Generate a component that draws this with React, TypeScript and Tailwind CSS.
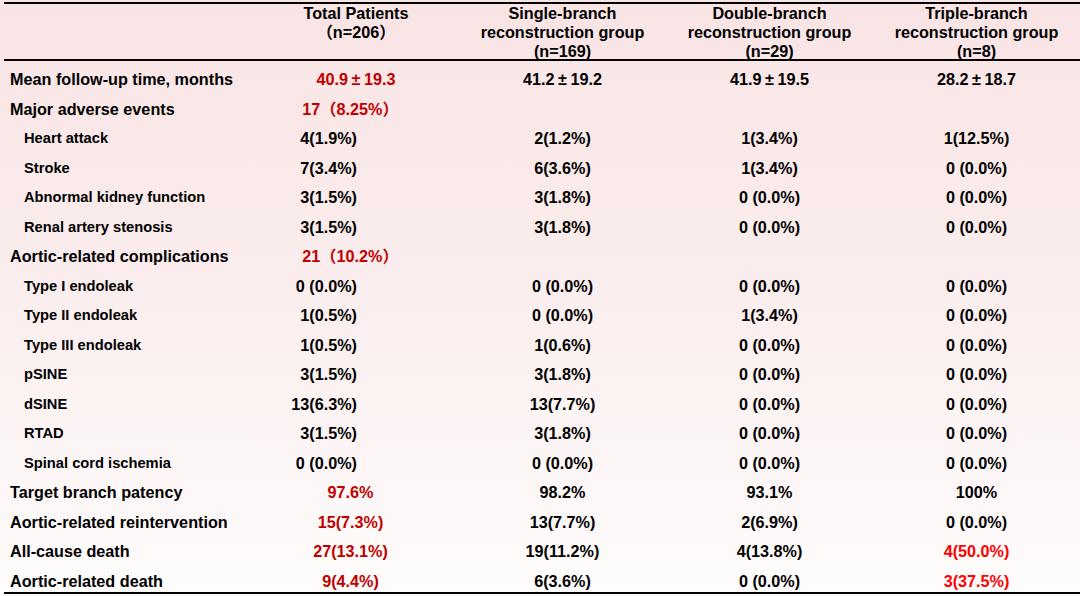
import React from "react";

type Row = {
  label: string;
  sub?: boolean;
  vals: string[];
  red?: number[]; // dark red columns
  bright?: number[]; // bright red columns
  pm?: boolean;
};

const rows: Row[] = [
  { label: "Mean follow-up time, months", vals: ["40.9±19.3", "41.2±19.2", "41.9±19.5", "28.2±18.7"], red: [0], pm: true },
  { label: "Major adverse events", vals: ["17（8.25%）", "", "", ""], red: [0] },
  { label: "Heart attack", sub: true, vals: ["4(1.9%)", "2(1.2%)", "1(3.4%)", "1(12.5%)"] },
  { label: "Stroke", sub: true, vals: ["7(3.4%)", "6(3.6%)", "1(3.4%)", "0 (0.0%)"] },
  { label: "Abnormal kidney function", sub: true, vals: ["3(1.5%)", "3(1.8%)", "0 (0.0%)", "0 (0.0%)"] },
  { label: "Renal artery stenosis", sub: true, vals: ["3(1.5%)", "3(1.8%)", "0 (0.0%)", "0 (0.0%)"] },
  { label: "Aortic-related complications", vals: ["21（10.2%）", "", "", ""], red: [0] },
  { label: "Type I endoleak", sub: true, vals: ["0 (0.0%)", "0 (0.0%)", "0 (0.0%)", "0 (0.0%)"] },
  { label: "Type II endoleak", sub: true, vals: ["1(0.5%)", "0 (0.0%)", "1(3.4%)", "0 (0.0%)"] },
  { label: "Type III endoleak", sub: true, vals: ["1(0.5%)", "1(0.6%)", "0 (0.0%)", "0 (0.0%)"] },
  { label: "pSINE", sub: true, vals: ["3(1.5%)", "3(1.8%)", "0 (0.0%)", "0 (0.0%)"] },
  { label: "dSINE", sub: true, vals: ["13(6.3%)", "13(7.7%)", "0 (0.0%)", "0 (0.0%)"] },
  { label: "RTAD", sub: true, vals: ["3(1.5%)", "3(1.8%)", "0 (0.0%)", "0 (0.0%)"] },
  { label: "Spinal cord ischemia", sub: true, vals: ["0 (0.0%)", "0 (0.0%)", "0 (0.0%)", "0 (0.0%)"] },
  { label: "Target branch patency", vals: ["97.6%", "98.2%", "93.1%", "100%"], red: [0] },
  { label: "Aortic-related reintervention", vals: ["15(7.3%)", "13(7.7%)", "2(6.9%)", "0 (0.0%)"], red: [0] },
  { label: "All-cause death", vals: ["27(13.1%)", "19(11.2%)", "4(13.8%)", "4(50.0%)"], red: [0], bright: [3] },
  { label: "Aortic-related death", vals: ["9(4.4%)", "6(3.6%)", "0 (0.0%)", "3(37.5%)"], red: [0], bright: [3] },
];

const headers = [
  ["Total Patients", "（n=206）"],
  ["Single-branch", "reconstruction group", "(n=169)"],
  ["Double-branch", "reconstruction group", "(n=29)"],
  ["Triple-branch", "reconstruction group", "(n=8)"],
];

function Value({ text, pm }: { text: string; pm?: boolean }) {
  if (pm && text.includes("±")) {
    const [a, b] = text.split("±");
    return (
      <span>
        {a}
        <span className="inline-block w-[16px] text-center">±</span>
        {b}
      </span>
    );
  }
  return <span>{text}</span>;
}

export default function App() {
  return (
    <main
      className="w-[1080px] h-[596px] overflow-hidden bg-gradient-to-b from-[#f9e4e4] via-[#fbeeee] to-[#fefcfc] text-black font-bold"
      style={{ fontFamily: '"Liberation Sans", Arial, "Noto Sans CJK SC", sans-serif' }}
    >
      <div className="ml-[4px] mt-[2px] w-[1076px] border-t-2 border-b-2 border-black">
        {/* header */}
        <div className="grid grid-cols-[249px_206px_207px_207px_207px] h-[57px] border-b-2 border-black text-[16.2px] leading-[19px]">
          <div />
          {headers.map((h, i) => (
            <div key={i} className="flex flex-col items-center">
              {h.map((line) => (
                <span key={line}>{line}</span>
              ))}
            </div>
          ))}
        </div>

        {/* body */}
        {rows.map((r) => (
          <div
            key={r.label}
            className="grid grid-cols-[249px_206px_207px_207px_207px] h-[29.5px] pt-[7px] items-center text-[16.2px] leading-[20px]"
          >
            <div className={r.sub ? "pl-[20px] text-[14.7px]" : "pl-[6px]"}>{r.label}</div>
            {r.vals.map((v, i) => {
              const isRed = r.red?.includes(i);
              const isBright = r.bright?.includes(i);
              let align = "text-center";
              if (i === 0 && r.sub) align = "text-right pr-[102px]";
              else if (i === 0 && !r.pm) align = "text-center pr-[11px]";
              return (
                <div
                  key={i}
                  className={`${align} ${isRed ? "text-[#c00000]" : isBright ? "text-[#ff0000]" : "text-black"}`}
                >
                  <Value text={v} pm={r.pm} />
                </div>
              );
            })}
          </div>
        ))}
      </div>
    </main>
  );
}
